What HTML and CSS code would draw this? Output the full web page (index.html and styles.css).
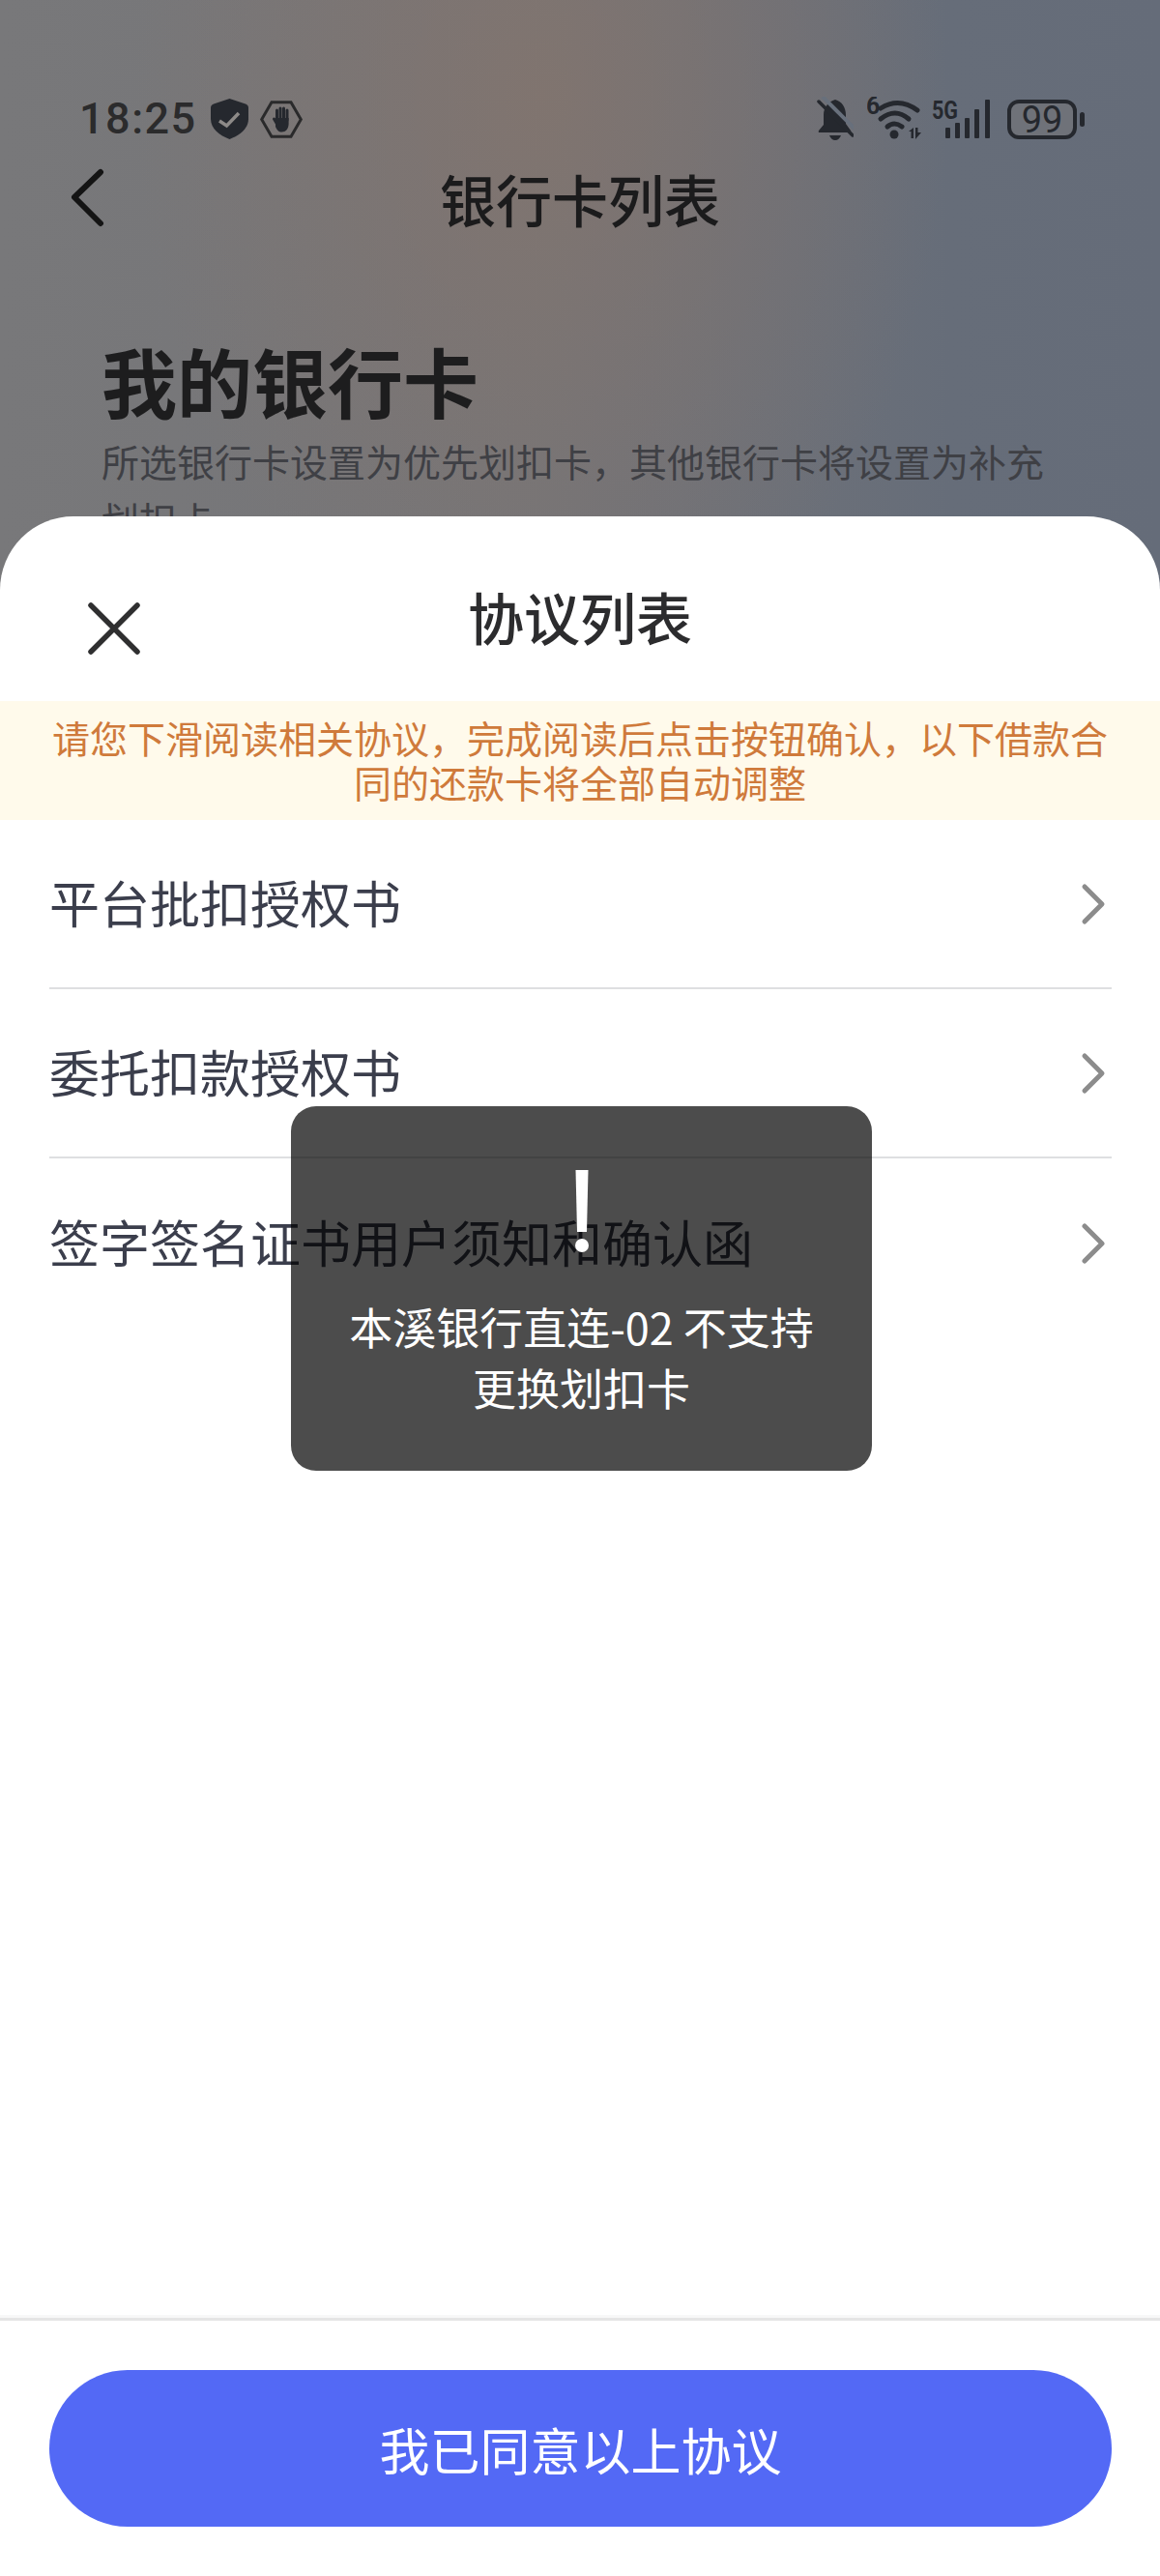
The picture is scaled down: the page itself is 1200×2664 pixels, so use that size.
FILE: index.html
```html
<!DOCTYPE html>
<html lang="zh-CN">
<head>
    <meta charset="UTF-8">
    <meta name="viewport" content="width=device-width, initial-scale=1.0">
    <title>银行卡列表</title>
    <link rel="stylesheet" href="styles.css">
</head>
<body>
    <div class="page">
        <div class="statusbar">
            <div class="status-left">
                <span class="time">18:25</span>
                <svg class="shield" viewBox="218 53 39 42">
                    <path class="ink" d="M237.500 53 L254 58.500 Q257 59.500 257 62.500 V74 C257 84 248 91 237.500 95 C227 91 218 84 218 74 V62.500 Q218 59.500 221 58.500 Z"/>
                    <path class="tick" d="M227 76 L234.500 81 L247 68"/>
                </svg>
                <svg class="hexagon" viewBox="269 55 44 39">
                    <path class="outline" d="M270.700 74.500 L281 56.700 H301 L311.300 74.500 L301 92.300 H281 Z"/>
                    <path class="fingers" d="M286.500 65 V74 M290 63 V74 M293.500 63 V74 M297 65 V75 M283.500 74 L287 80"/>
                    <path class="ink" d="M285 73 H298.600 V79 C298.600 84 295.500 87.500 291.500 87.500 C288 87.500 286.500 85.500 285 82 Z"/>
                </svg>
            </div>
            <div class="status-right">
                <svg class="bell" viewBox="845 50 38 46">
                    <path class="ink" d="M864 53 C871 55 875 61 875 69 V78 L880 85 Q881 87 879 87 H848 Q846 87 847 85 L852 79 V69 C852 61 857 55 864 53 Z"/>
                    <path class="ink" d="M858 90 H870 Q868 95 864 95 Q860 95 858 90 Z"/>
                    <path class="cut" d="M851 50 L885 84"/>
                    <path class="slash" d="M847 55 L882 90"/>
                </svg>
                <svg class="wifi" viewBox="897 50 56 46">
                    <text class="net-text" x="896" y="68">6</text>
                    <path class="arc" d="M911 62 Q930 50 949 64"/>
                    <path class="arc" d="M911 73 Q926 61 940 73"/>
                    <path class="arc" d="M918 81 Q925 75 933 81"/>
                    <circle class="ink" cx="925" cy="89" r="4.500"/>
                    <path class="ink" d="M945 82 V93 H942.500 V86 H940 Z M947 82 H949.500 V87 H953 L947 94 Z"/>
                </svg>
                <svg class="signal" viewBox="964 50 60 46">
                    <text class="net-text" x="964" y="73" textLength="27" lengthAdjust="spacingAndGlyphs">5G</text>
                    <rect class="ink" x="978" y="82" width="5" height="11" rx="1"/>
                    <rect class="ink" x="988" y="77" width="5" height="16" rx="1"/>
                    <rect class="ink" x="998" y="72" width="5" height="21" rx="1"/>
                    <rect class="ink" x="1008" y="63" width="5" height="30" rx="1"/>
                    <rect class="ink" x="1019" y="53" width="5" height="40" rx="1"/>
                </svg>
                <svg class="battery" viewBox="1042 50 80 46">
                    <rect class="battery-body" x="1044" y="55" width="68" height="37" rx="10"/>
                    <text class="battery-text" x="1078" y="87" text-anchor="middle">99</text>
                    <rect class="ink" x="1117" y="66" width="5" height="15" rx="2.500"/>
                </svg>
            </div>
        </div>

        <div class="nav">
            <svg class="back" viewBox="0 0 40 66">
                <path d="M31 6 L4 32 L31 59"/>
            </svg>
            <div class="nav-title">银行卡列表</div>
        </div>

        <div class="intro">
            <h1>我的银行卡</h1>
            <p>所选银行卡设置为优先划扣卡，其他银行卡将设置为补充划扣卡</p>
        </div>

        <div class="sheet">
            <div class="sheet-head">
                <svg class="close" viewBox="0 0 56 56">
                    <path d="M4 4 L52 52 M52 4 L4 52"/>
                </svg>
                <div class="sheet-title">协议列表</div>
            </div>
            <div class="notice">请您下滑阅读相关协议，完成阅读后点击按钮确认，以下借款合同的还款卡将全部自动调整</div>
            <div class="list">
                <div class="row">
                    <span>平台批扣授权书</span>
                    <svg class="chevron" viewBox="0 0 28 44"><path d="M4 4 L22 22 L4 40"/></svg>
                </div>
                <div class="row">
                    <span>委托扣款授权书</span>
                    <svg class="chevron" viewBox="0 0 28 44"><path d="M4 4 L22 22 L4 40"/></svg>
                </div>
                <div class="row">
                    <span>签字签名证书用户须知和确认函</span>
                    <svg class="chevron" viewBox="0 0 28 44"><path d="M4 4 L22 22 L4 40"/></svg>
                </div>
            </div>
            <div class="footer">
                <button class="agree" type="button">我已同意以上协议</button>
            </div>
        </div>

        <div class="toast">
            <svg class="alert" viewBox="0 0 14 86">
                <path d="M0.500 0 H13.500 L12 64 H2 Z"/>
                <circle cx="7" cy="78" r="7"/>
            </svg>
            <p>本溪银行直连-02 不支持更换划扣卡</p>
        </div>
    </div>
</body>
</html>
```
FILE: styles.css
```css
*{
    box-sizing: border-box;
}
body{
    margin: 0;
    padding: 0;
    font-family: "Noto Sans CJK SC", "Noto Sans", sans-serif;
}
.page{
    position: relative;
    width: 1200px;
    height: 2664px;
    overflow: hidden;
    background:
        radial-gradient(ellipse 420px 620px at 560px 100px, rgba(132,116,108,0.75), rgba(132,116,108,0) 100%),
        linear-gradient(90deg, #78787a 0%, #757578 45%, #666d79 82%, #656c79 100%);
}

/* status bar */
.statusbar{
    display: flex;
    justify-content: space-between;
    align-items: center;
    height: 46px;
    margin-top: 50px;
    padding: 0 78px 0 82px;
    position: relative;
    top: 50px;
}
.status-left{
    display: flex;
    align-items: center;
}
.time{
    font-family: Roboto, sans-serif;
    font-size: 45px;
    font-weight: 500;
    line-height: 46px;
    letter-spacing: 1.500px;
    color: #2b2b2c;
    width: 118px;
}
.shield{
    width: 39px;
    height: 42px;
    margin-left: 18px;
}
.hexagon{
    width: 44px;
    height: 39px;
    margin-left: 12px;
}
.status-right{
    display: flex;
    align-items: center;
}
.bell{
    width: 38px;
    height: 46px;
}
.wifi{
    width: 56px;
    height: 46px;
    margin-left: 14px;
}
.signal{
    width: 60px;
    height: 46px;
    margin-left: 11px;
}
.battery{
    width: 80px;
    height: 46px;
    margin-left: 18px;
}
.ink{
    fill: #25282e;
}
.tick{
    fill: none;
    stroke: #8d8a88;
    stroke-width: 3.500px;
}
.outline{
    fill: none;
    stroke: #2a2a2b;
    stroke-width: 3px;
}
.fingers{
    fill: none;
    stroke: #25282e;
    stroke-width: 3px;
    stroke-linecap: round;
}
.cut{
    fill: none;
    stroke: #68707c;
    stroke-width: 4px;
}
.slash{
    fill: none;
    stroke: #25282e;
    stroke-width: 3.500px;
    stroke-linecap: round;
}
.arc{
    fill: none;
    stroke: #25282e;
    stroke-width: 5px;
    stroke-linecap: round;
}
.net-text{
    font-family: Roboto, sans-serif;
    font-size: 25px;
    font-weight: 700;
    fill: #25282e;
}
.battery-body{
    fill: #6f7279;
    stroke: #25282e;
    stroke-width: 4px;
}
.battery-text{
    font-family: Roboto, sans-serif;
    font-size: 38px;
    fill: #25282e;
}

/* page behind the sheet */
.nav{
    position: relative;
    display: flex;
    justify-content: center;
    align-items: center;
    height: 110px;
    margin-top: 54px;
}
.back{
    position: absolute;
    left: 73px;
    top: 22px;
    width: 40px;
    height: 66px;
}
.back path{
    fill: none;
    stroke: #141414;
    stroke-width: 6px;
    stroke-linecap: round;
    stroke-linejoin: round;
}
.nav-title{
    font-size: 58px;
    font-weight: 500;
    color: #1b1b1c;
}
.intro{
    padding: 83px 100px 0 105px;
}
.intro h1{
    margin: 0;
    font-size: 78px;
    font-weight: 700;
    line-height: 100px;
    color: #1d1d1e;
}
.intro p{
    margin: 3px 0 0 0;
    font-size: 39px;
    line-height: 60px;
    color: #3f4045;
}

/* bottom sheet */
.sheet{
    position: absolute;
    left: 0;
    right: 0;
    top: 534px;
    bottom: 0;
    display: flex;
    flex-direction: column;
    background-color: white;
    border-radius: 76px 76px 0 0;
}
.sheet-head{
    position: relative;
    height: 191px;
    padding-top: 66px;
    text-align: center;
}
.close{
    position: absolute;
    left: 90px;
    top: 88px;
    width: 56px;
    height: 56px;
}
.close path{
    fill: none;
    stroke: #2f2f30;
    stroke-width: 5.500px;
    stroke-linecap: round;
}
.sheet-title{
    font-size: 58px;
    font-weight: 500;
    line-height: 74px;
    color: #2c2c2e;
}
.notice{
    padding: 14px 50px 17px 50px;
    background-color: #fffaeb;
    color: #cf7a3b;
    font-size: 39px;
    line-height: 46px;
    text-align: center;
}
.list{
    flex: 1;
    padding: 0 50px 0 51px;
}
.row{
    display: flex;
    justify-content: space-between;
    align-items: center;
    height: 175px;
    padding-right: 4px;
    border-bottom: 2px solid #dedfe1;
    font-size: 52px;
    color: #3b3e4c;
}
.row:last-child{
    border-bottom: none;
}
.row span{
    position: relative;
    top: -2px;
}
.chevron{
    width: 28px;
    height: 44px;
}
.chevron path{
    fill: none;
    stroke: #8c8c8c;
    stroke-width: 5px;
    stroke-linecap: round;
    stroke-linejoin: round;
}
.footer{
    padding: 51px 50px 51px 51px;
    border-top: 3px solid #e5e5e5;
    box-shadow: 0 -3px 0 #f8f8f8;
}
.agree{
    display: block;
    width: 100%;
    height: 162px;
    border: none;
    border-radius: 81px;
    background-color: #5369f5;
    color: white;
    font-family: inherit;
    font-size: 52px;
}

/* toast */
.toast{
    position: absolute;
    left: 301px;
    top: 1144px;
    width: 601px;
    height: 377px;
    display: flex;
    flex-direction: column;
    align-items: center;
    padding: 66px 60px 0 60px;
    background-color: rgba(0,0,0,0.7);
    border-radius: 26px;
}
.alert{
    width: 14px;
    height: 86px;
    fill: white;
}
.toast p{
    margin: 44px 0 0 0;
    font-size: 45px;
    line-height: 63px;
    color: white;
    text-align: center;
}
```
